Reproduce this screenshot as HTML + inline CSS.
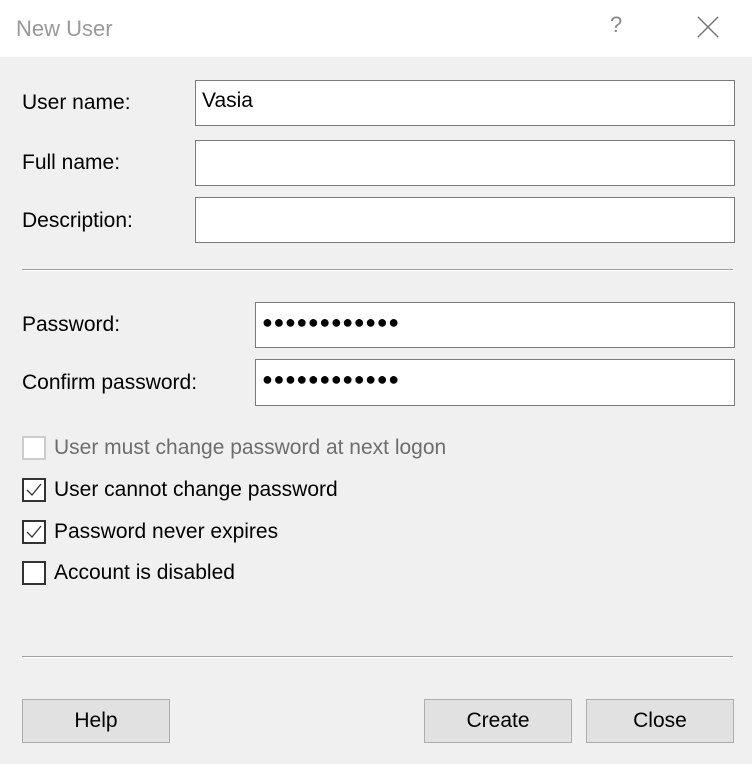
<!DOCTYPE html>
<html><head><style>
body{margin:0;width:752px;height:764px;background:#f0f0f0;font-family:"Liberation Sans",Arial,sans-serif;font-size:21px;color:#000;position:relative;overflow:hidden}
.a{position:absolute}
.title{left:0;top:0;width:752px;height:57px;background:#fff}
.lbl{line-height:24px}
.in{background:#fff;border:1px solid #7a7a7a;box-sizing:border-box}
.sep{height:1px;background:#a0a0a0;border-bottom:1px solid #fff}
.cb{width:24px;height:24px;box-sizing:border-box;border:2px solid #333;background:#fff}
.btn{background:#e1e1e1;border:1px solid #adadad;box-sizing:border-box;text-align:center;line-height:42px}
.dots{font-size:18px;letter-spacing:0.6px;left:6px;top:9px}
</style></head><body>
<div class="a title"></div>
<div class="a" style="left:16px;top:16px;color:#999;font-size:22px">New User</div>
<div class="a" style="left:610px;top:12px;color:#888;font-size:22px">?</div>
<svg class="a" style="left:697px;top:16px" width="22" height="22"><path d="M1 1L21 21M21 1L1 21" stroke="#777" stroke-width="1.5"/></svg>

<div class="a lbl" style="left:22px;top:91px">User name:</div>
<div class="a in" style="left:195px;top:80px;width:540px;height:46px"><span class="a" style="left:6px;top:8px">Vasia</span></div>
<div class="a lbl" style="left:22px;top:151px">Full name:</div>
<div class="a in" style="left:195px;top:140px;width:540px;height:46px"></div>
<div class="a lbl" style="left:22px;top:209px">Description:</div>
<div class="a in" style="left:195px;top:197px;width:540px;height:46px"></div>
<div class="a sep" style="left:22px;top:269px;width:711px"></div>

<div class="a lbl" style="left:22px;top:313px">Password:</div>
<div class="a in" style="left:255px;top:302px;width:480px;height:46px"><span class="a dots">●●●●●●●●●●●●</span></div>
<div class="a lbl" style="left:22px;top:371px">Confirm password:</div>
<div class="a in" style="left:255px;top:359px;width:480px;height:47px"><span class="a dots">●●●●●●●●●●●●</span></div>

<div class="a cb" style="left:22px;top:436px;border-color:#ccc"></div>
<div class="a lbl" style="left:54px;top:436px;color:#6d6d6d">User must change password at next logon</div>
<div class="a cb" style="left:22px;top:478px"><svg width="20" height="20"><path d="M3 10L8 15L17 4" fill="none" stroke="#333" stroke-width="1.3"/></svg></div>
<div class="a lbl" style="left:54px;top:478px">User cannot change password</div>
<div class="a cb" style="left:22px;top:520px"><svg width="20" height="20"><path d="M3 10L8 15L17 4" fill="none" stroke="#333" stroke-width="1.3"/></svg></div>
<div class="a lbl" style="left:54px;top:520px">Password never expires</div>
<div class="a cb" style="left:22px;top:561px"></div>
<div class="a lbl" style="left:54px;top:561px">Account is disabled</div>

<div class="a sep" style="left:22px;top:656px;width:711px"></div>
<div class="a btn" style="left:22px;top:699px;width:148px;height:44px">Help</div>
<div class="a btn" style="left:424px;top:699px;width:148px;height:44px">Create</div>
<div class="a btn" style="left:586px;top:699px;width:148px;height:44px">Close</div>
</body></html>
